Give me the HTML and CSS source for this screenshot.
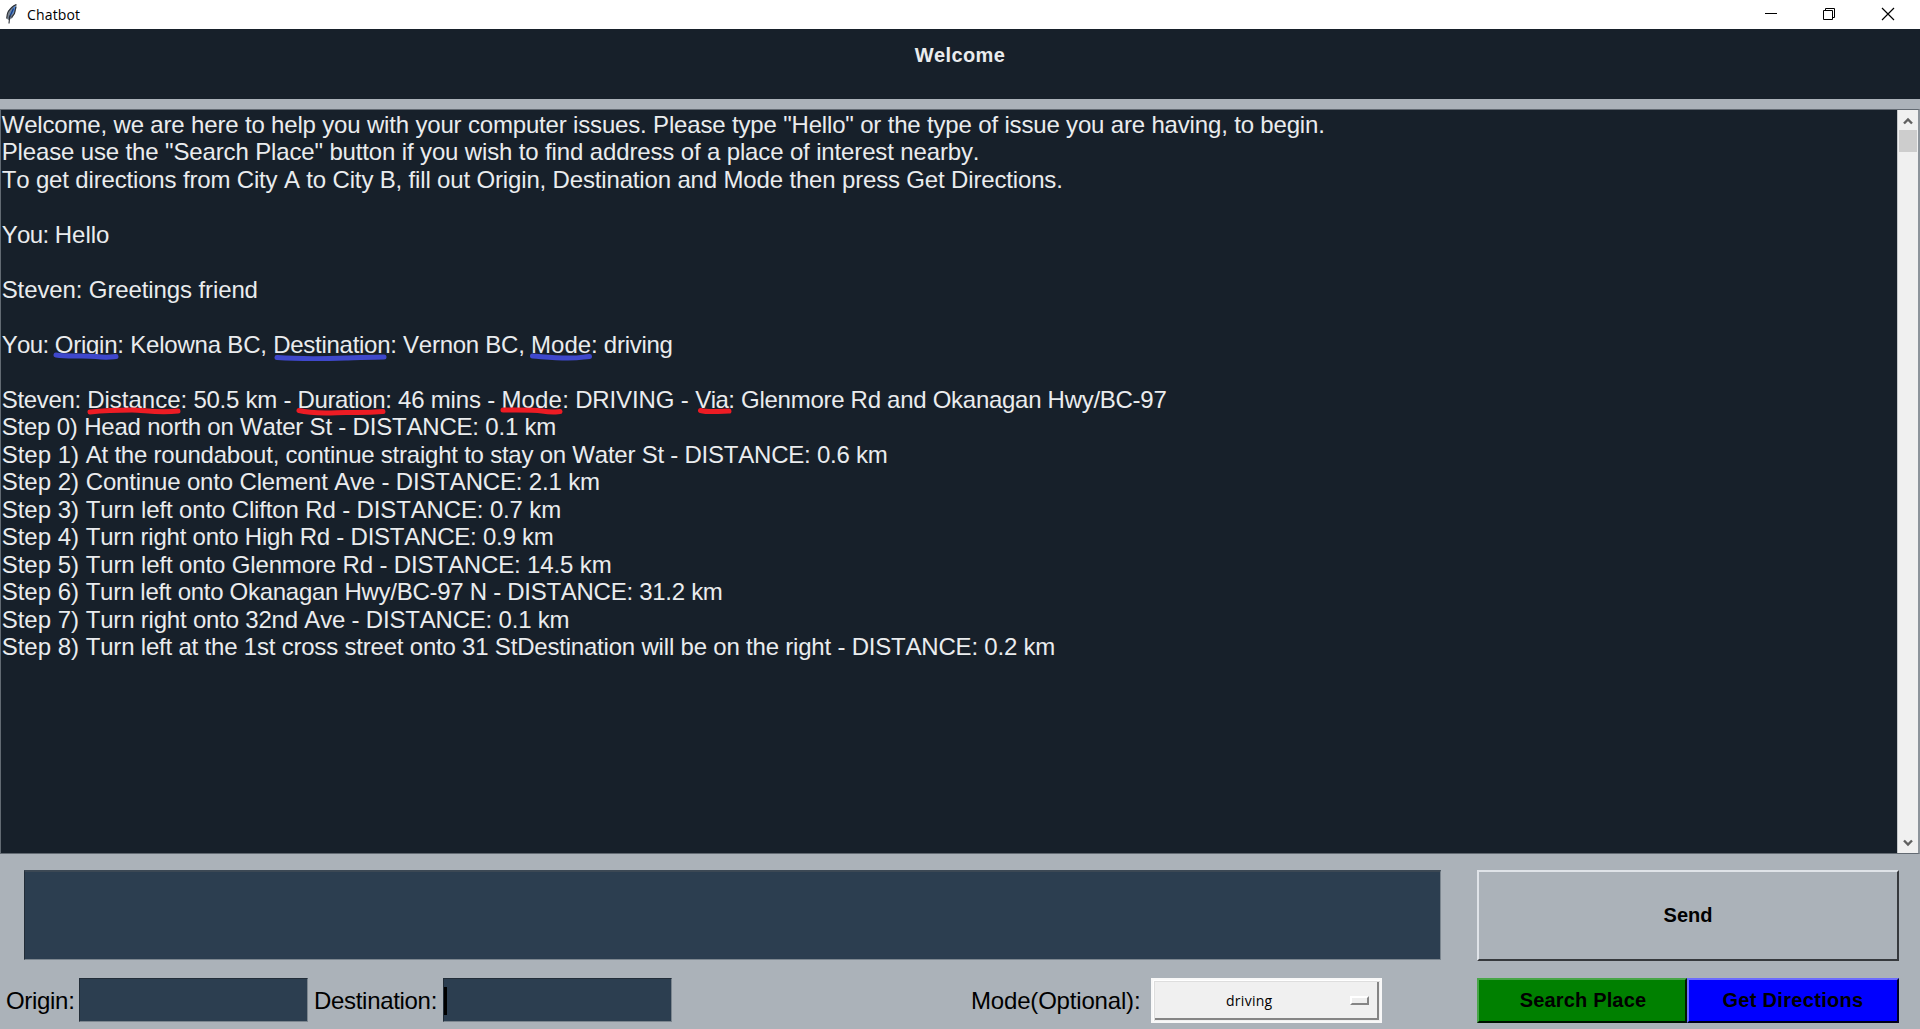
FILE: index.html
```html
<!DOCTYPE html>
<html lang="en">
<head>
<meta charset="utf-8">
<title>Chatbot</title>
<link rel="stylesheet" href="styles.css">
</head>
<body>
<div class="window">
  <header class="titlebar">
    <svg class="feather" width="12" height="20" viewBox="0 0 12 20"><path d="M10.500.3C6.500 1.500 2.200 5.500 1.200 9L.6 14.500l2.200 1.800 3.500-2.300 2.500-4.500L10.500 4z" fill="#7d868f"/><path d="M9.800 1.500C6.500 4 4 7.500 3.200 13l3.600-3.500L9.200 5z" fill="#4f8be0"/><path d="M7.500 4.500L3 14.500" stroke="#1c3f7d" stroke-width="1.400" fill="none"/><path d="M10.300.6C6.500 2 2 6.500 1.300 10l-.6 4.500M9.800 3L8.500 9.500l-3 4M3.800 11.500L3 19.500" stroke="#2b2f36" stroke-width="1.100" fill="none"/></svg>
    <span class="titlebar-name">Chatbot</span>
    <svg class="controls" width="130" height="14" viewBox="0 0 130 14" fill="none" stroke="#000"><path d="M0 6.500h12M58.500 3.500h9v9h-9zM60.500 3.500v-2h9v9h-2"/><path d="M117 1l12 12M129 1l-12 12" stroke-width="1.200"/></svg>
  </header>
  <h1 class="banner">Welcome</h1>
  <main class="log">
    <div class="messages">
      <p class="line k17">Welcome, we are here to help you with your computer issues. Please type "Hello" or the type of issue you are having, to begin.</p>
      <p class="line k14">Please use the "Search Place" button if you wish to find address of a place of interest nearby.</p>
      <p class="line k16">To get directions from City A to City B, fill out Origin, Destination and Mode then press Get Directions.</p>
      <p class="line"></p>
      <p class="line"><span class="k60">You: </span>Hello</p>
      <p class="line"></p>
      <p class="line k11">Steven: Greetings friend</p>
      <p class="line"></p>
      <p class="line"><span class="k60">You: </span><span class="mark blue k25">Origin<svg width="68" height="10" viewBox="0 0 68 10"><path d="M3 4C16 6 32 4 43 5.500S58 6 63 5.500"/></svg></span><span class="k20">: Kelowna BC, </span><span class="mark blue k28">Destination<svg width="120" height="10" viewBox="0 0 120 10"><path d="M5 6.500C32 8.500 60 7.500 76 7S102 6 112 6"/></svg></span><span class="k25">: Vernon BC, </span><span class="mark blue">Mode<svg width="68" height="10" viewBox="0 0 68 10"><path d="M2.500 5C16 6 24 7 38 7S52 6 59.500 5.500"/></svg></span><span class="k28">: driving</span></p>
      <p class="line"></p>
      <p class="line"><span class="k32">Steven: </span><span class="mark red">Distance<svg width="100" height="10" viewBox="0 0 100 10"><path d="M4 6C18 4.500 34 4 46 4S72 7.500 92 5"/></svg></span><span class="k25">: 50.5 km - </span><span class="mark red k40">Duration<svg width="95" height="10" viewBox="0 0 95 10"><path d="M3 4.500C18 8.500 38 6.500 50 6.500S70 7 87 5.500"/></svg></span><span class="k20">: 46 mins - </span><span class="mark red k-wide">Mode<svg width="70" height="10" viewBox="0 0 70 10"><path d="M3 4C16 4 32 3.500 42 5S54 6 60 5.500"/></svg></span><span class="k14">: DRIVING - </span><span class="mark red k50">Via<svg width="42" height="10" viewBox="0 0 42 10"><path d="M6.500 4.500C14 6.500 24 5.500 35 5"/></svg></span><span class="k28">: Glenmore Rd and Okanagan Hwy/BC-97</span></p>
      <p class="line k20">Step 0) Head north on Water St - DISTANCE: 0.1 km</p>
      <p class="line"><span>Step 1) </span><span class="k23">At the roundabout, continue straight to stay on Water St - DISTANCE: 0.6 km</span></p>
      <p class="line"><span>Step 2) </span><span class="k17">Continue onto Clement Ave - DISTANCE: 2.1 km</span></p>
      <p class="line"><span>Step 3) </span><span class="k14">Turn left onto Clifton Rd - DISTANCE: 0.7 km</span></p>
      <p class="line"><span>Step 4) </span><span class="k23">Turn right onto High Rd - DISTANCE: 0.9 km</span></p>
      <p class="line"><span>Step 5) </span><span class="k14">Turn left onto Glenmore Rd - DISTANCE: 14.5 km</span></p>
      <p class="line"><span>Step 6) </span><span class="k28">Turn left onto Okanagan Hwy/BC-97 N - DISTANCE: 31.2 km</span></p>
      <p class="line"><span>Step 7) </span><span class="k20">Turn right onto 32nd Ave - DISTANCE: 0.1 km</span></p>
      <p class="line"><span>Step 8) </span><span class="k20">Turn left at the 1st cross street onto 31 StDestination will be on the right - DISTANCE: 0.2 km</span></p>
    </div>
    <div class="scrollbar">
      <svg class="arrow" width="10" height="8" viewBox="0 0 10 8"><path d="M1 6.500L5 2.500l4 4"/></svg>
      <div class="thumb"></div>
      <svg class="arrow arrow-down" width="10" height="8" viewBox="0 0 10 8"><path d="M1 1.500l4 4 4-4"/></svg>
    </div>
  </main>
  <footer class="panel">
    <div class="compose">
      <div class="field message"></div>
      <button class="btn send">Send</button>
    </div>
    <div class="route">
      <label class="label origin">Origin:</label>
      <div class="field entry"></div>
      <label class="label destination">Destination:</label>
      <div class="field entry"><span class="caret"></span></div>
      <label class="label mode">Mode(Optional):</label>
      <div class="select"><span class="select-value">driving</span><span class="select-tab"></span></div>
      <div class="actions">
        <button class="btn search">Search Place</button>
        <button class="btn directions">Get Directions</button>
      </div>
    </div>
  </footer>
</div>
</body>
</html>
```
FILE: styles.css
```css
* { box-sizing: border-box; }
body { margin: 0; background: #abb2b9; font-family: "Liberation Sans", Arial, sans-serif; font-kerning: none; overflow: hidden; }
.window { display: flex; flex-direction: column; height: 1029px; }

.titlebar { height: 29px; background: #fff; display: flex; padding: 0 25px 0 6px; }
.feather { margin-top: 4px; }
.titlebar-name { margin-left: 9px; font: 14px/29px "Open Sans", sans-serif; letter-spacing: .15px; color: #000; }
.controls { margin: 7px 0 0 auto; }

.banner { margin: 0; height: 70px; padding-top: 14px; background: #17202a; color: #eaecee; font-size: 20px; line-height: 24px; letter-spacing: .35px; text-align: center; }

.log { margin-top: 10px; height: 745px; display: flex; background: #17202a; color: #eaecee; border: 1px solid #626a72; border-right: 2px solid #8d949b; }
.messages { flex: 1; padding: .5px 0 0 .7px; }
.line { margin: 0; height: 27.5px; line-height: 27.5px; font-size: 24px; white-space: pre; }

/* Tracking steps, named in hundredths of a pixel */
.k11 { letter-spacing: -.11px; }
.k14 { letter-spacing: -.14px; }
.k16 { letter-spacing: -.16px; }
.k17 { letter-spacing: -.17px; }
.k20 { letter-spacing: -.2px; }
.k23 { letter-spacing: -.23px; }
.k25 { letter-spacing: -.25px; }
.k28 { letter-spacing: -.28px; }
.k32 { letter-spacing: -.32px; }
.k40 { letter-spacing: -.4px; }
.k50 { letter-spacing: -.5px; }
.k60 { letter-spacing: -.6px; }
.k-wide { letter-spacing: .16px; }

/* Pen strokes drawn over the foot of a word */
.mark { position: relative; }
.mark svg { position: absolute; left: -1.500px; top: 20px; fill: none; stroke-width: 5; stroke-linecap: round; overflow: visible; }
.blue svg { stroke: #3f48cc; }
.red svg { stroke: #ed1c24; }

.scrollbar { width: 21px; background: #f0f0f0; border-left: 1px solid #c4c7ca; display: flex; flex-direction: column; align-items: center; }
.arrow { margin-top: 7px; fill: none; stroke: #606060; stroke-width: 2.400; }
.thumb { width: 18px; height: 22px; margin-top: 5px; background: #cdcdcd; }
.arrow-down { margin: auto 0 6px; }

.panel { padding-top: 16px; }
.compose { display: flex; padding-left: 24px; gap: 36px; }
.field { background: #2c3e50; border: 1px solid; border-color: #222d38 #7c868f #7c868f #222d38; }
.message { width: 1417px; height: 90px; border-top: 2px solid #3c4854; }
.btn { margin: 0; padding: 0 0 2px; font: bold 20px/24px "Liberation Sans", Arial, sans-serif; color: #000; border: 2px solid; }
.send { width: 422px; height: 91px; background: #abb2b9; border-color: #dfe3e8 #36393d #36393d #dfe3e8; }
.route { display: flex; height: 45px; margin-top: 17px; padding-left: 6px; }
.label { font-size: 24px; line-height: 46px; letter-spacing: -.31px; white-space: nowrap; color: #000; }
.origin { width: 73px; }
.entry { width: 229px; height: 44px; }
.destination { width: 135px; padding-left: 6px; }
.caret { display: block; width: 3px; height: 28px; margin: 8px 0 0; background: #000; }
.mode { width: 479px; padding-left: 299px; letter-spacing: -.18px; }
.select { width: 231px; display: flex; align-items: center; background: #f0f0f0; border: 2px solid #f8f8f8; box-shadow: inset 1px 1px 0 #fff, inset 2px 2px 0 #dedede, inset -1px -1px 0 #f0f0f0, inset -3px -3px 0 #858585; }
.select-value { margin-left: 73px; font: 14px/20px "Open Sans", sans-serif; letter-spacing: .28px; }
.select-tab { width: 19px; height: 9px; margin: 0 11px 0 auto; background: #eee; border: 2px solid; border-color: #fff #858585 #858585 #fff; }
.actions { display: flex; margin-left: 95px; }
.search { width: 210px; padding-left: 2px; background: #008000; border-color: #48a648 #001800 #001000 #48a648; letter-spacing: .16px; }
.directions { width: 212px; background: #0000ff; border-color: #6b6bff #000028 #000018 #6b6bff; letter-spacing: .31px; }
```
